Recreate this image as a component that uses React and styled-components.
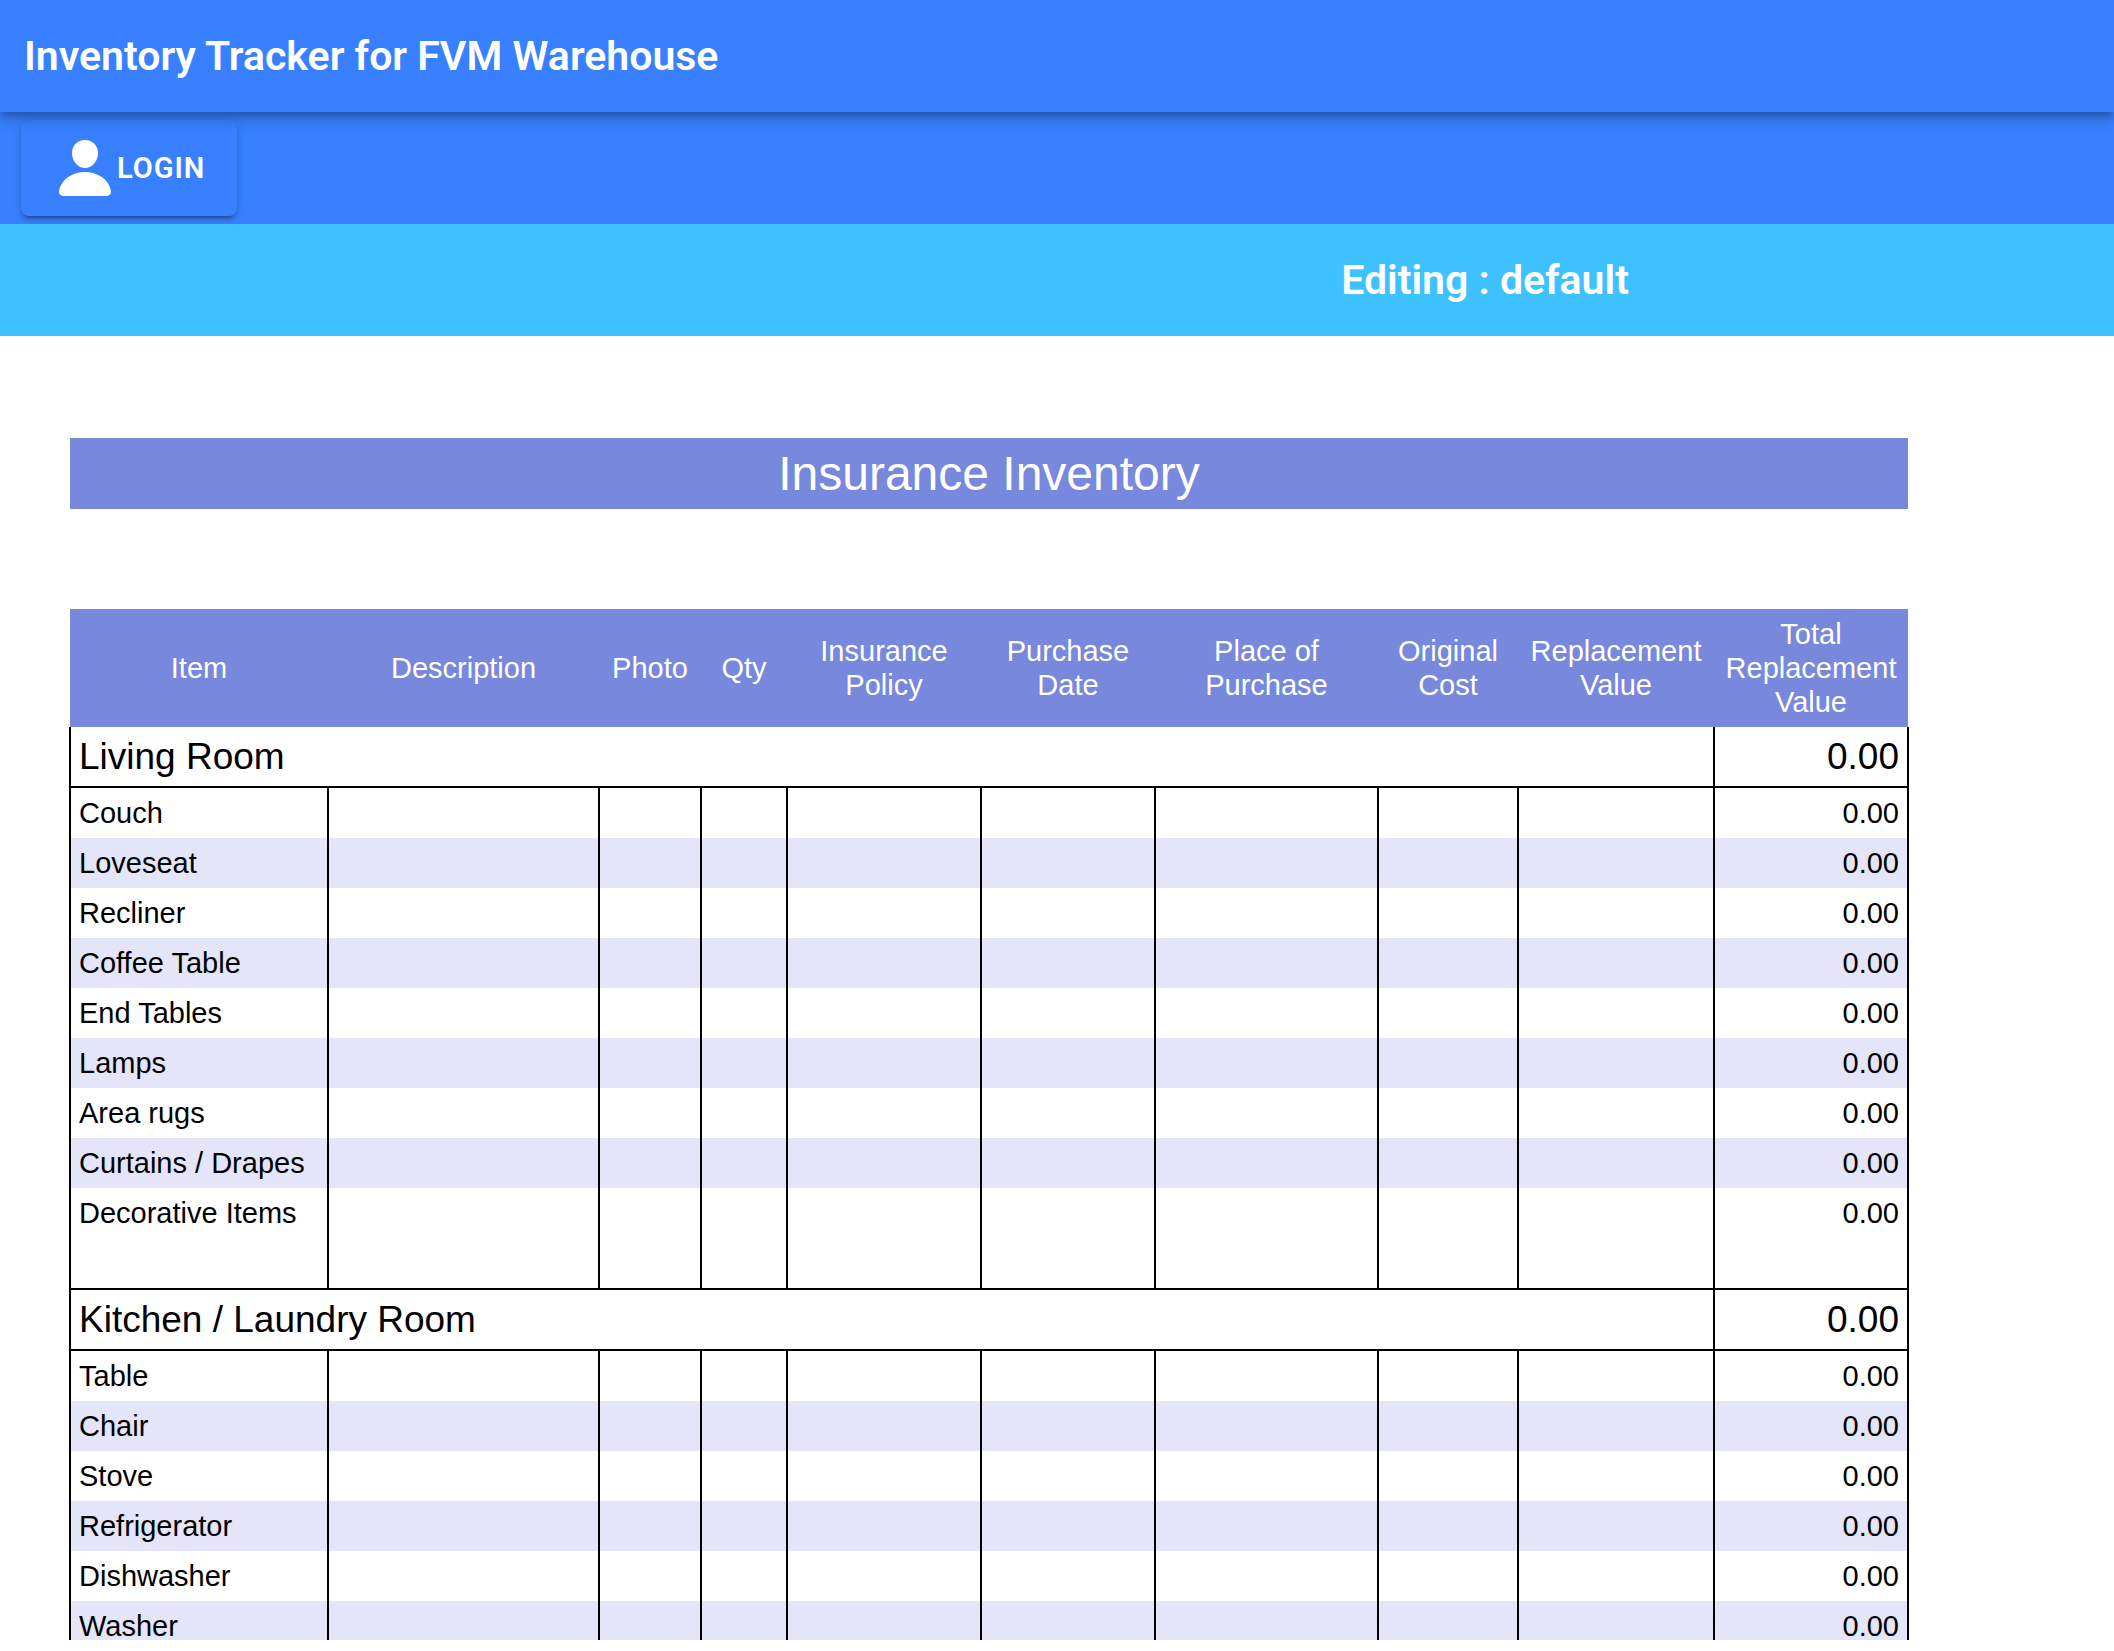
import React from 'react';
import styled, { createGlobalStyle } from 'styled-components';
import { IoPerson } from 'react-icons/io5';

const GlobalStyle = createGlobalStyle`
    * {
        box-sizing: border-box;
    }

    body {
        margin: 0;
        background-color: white;
        font-family: Roboto, sans-serif;
    }
`;

const Page = styled.div`
    display: flex;
    flex-direction: column;
    height: calc(100vh - 11px);
    overflow: hidden;
`;

const Header = styled.header`
    position: relative;
    z-index: 1;
    flex-shrink: 0;
    box-shadow: 0 4px 8px -2px rgba(0, 0, 0, 0.2), 0 8px 10px 0 rgba(0, 0, 0, 0.14), 0 2px 20px 0 rgba(0, 0, 0, 0.12);
`;

const Toolbar = styled.div`
    display: flex;
    align-items: center;
    flex-shrink: 0;
    min-height: 112px;
    padding: ${({ $padding }) => $padding || '0 24px'};
    background-color: ${({ $color }) => $color || '#3880ff'};
`;

const AppTitle = styled.h1`
    margin: 0;
    color: white;
    font-size: 41px;
    font-weight: 600;
    line-height: 48px;
`;

const FileTitle = styled(AppTitle).attrs({ as: 'h2' })`
    flex: 1;
    text-align: center;
`;

const LoginButton = styled.button`
    display: flex;
    align-items: center;
    height: 96px;
    padding: 0 32px;
    border: none;
    border-radius: 8px;
    background-color: #3880ff;
    box-shadow: 0 6px 2px -4px rgba(0, 0, 0, 0.2), 0 4px 4px 0 rgba(0, 0, 0, 0.14), 0 2px 10px 0 rgba(0, 0, 0, 0.12);
    color: white;
    font-family: inherit;
    font-size: 29px;
    font-weight: 600;
    letter-spacing: 1px;
    text-transform: uppercase;
    cursor: pointer;
`;

const Sheet = styled.main`
    flex: 1;
    min-height: 0;
    overflow: hidden;
    padding: 102px 206px 0 70px;
    font-family: Arial, "Liberation Sans", sans-serif;
`;

const SheetTitle = styled.h2`
    margin: 0 0 100px;
    padding: 8px;
    background-color: #7788dd;
    color: white;
    font-size: 48px;
    font-weight: 400;
    line-height: 55px;
    text-align: center;
`;

// the outer borders straddle the edges of the title bar
const Table = styled.table`
    width: calc(100% + 2px);
    margin: 0 -1px;
    table-layout: fixed;
    border-collapse: collapse;
    color: black;
    font-size: 29px;
    line-height: 34px;
`;

const Column = styled.col`
    width: ${({ $share }) => $share}%;
`;

const HeadCell = styled.th`
    padding: 8px;
    background-color: #7788dd;
    color: white;
    font-weight: 400;
    text-align: center;
    vertical-align: middle;
`;

const SectionCell = styled.th`
    padding: 8px;
    border: 2px solid black;
    border-top-width: ${({ $first }) => ($first ? '0' : '2px')};
    font-size: 37px;
    font-weight: 400;
    line-height: 43px;
    text-align: ${({ $align }) => $align || 'left'};
`;

const ItemRow = styled.tr`
    background-color: ${({ $striped }) => ($striped ? '#e4e5f8' : 'white')};
`;

const ItemCell = styled.td`
    padding: 8px;
    border-left: 2px solid black;
    border-right: 2px solid black;
    text-align: ${({ $align }) => $align || 'left'};
    white-space: nowrap;
`;

const columns = [
    { label: 'Item', width: 258 },
    { label: 'Description', width: 271 },
    { label: 'Photo', width: 102 },
    { label: 'Qty', width: 86 },
    { label: 'Insurance Policy', width: 194 },
    { label: 'Purchase Date', width: 174 },
    { label: 'Place of Purchase', width: 223 },
    { label: 'Original Cost', width: 140 },
    { label: 'Replacement Value', width: 196 },
    { label: 'Total Replacement Value', width: 194 },
];

const totalWidth = columns.reduce((sum, column) => sum + column.width, 0);

// an empty name is a blank line at the end of a section
const sections = [
    {
        name: 'Living Room',
        items: [
            'Couch',
            'Loveseat',
            'Recliner',
            'Coffee Table',
            'End Tables',
            'Lamps',
            'Area rugs',
            'Curtains / Drapes',
            'Decorative Items',
            '',
        ],
    },
    {
        name: 'Kitchen / Laundry Room',
        items: ['Table', 'Chair', 'Stove', 'Refrigerator', 'Dishwasher', 'Washer'],
    },
];

const formatValue = value => value.toFixed(2);

const Section = ({ section, first }) => (
    <tbody>
        <tr>
            <SectionCell $first={first} colSpan={columns.length - 1} scope="rowgroup">{section.name}</SectionCell>
            <SectionCell as="td" $first={first} $align="right">{formatValue(0)}</SectionCell>
        </tr>
        {section.items.map((item, index) => (
            <ItemRow key={index} $striped={item !== '' && index % 2 === 1}>
                <ItemCell>{item || '\u00a0'}</ItemCell>
                {columns.slice(1, -1).map(column => (
                    <ItemCell key={column.label} />
                ))}
                <ItemCell $align="right">{item && formatValue(0)}</ItemCell>
            </ItemRow>
        ))}
    </tbody>
);

const InventoryTable = () => (
    <Table>
        <colgroup>
            {columns.map(column => (
                <Column key={column.label} $share={(column.width / totalWidth) * 100} />
            ))}
        </colgroup>
        <thead>
            <tr>
                {columns.map(column => (
                    <HeadCell key={column.label} scope="col">{column.label}</HeadCell>
                ))}
            </tr>
        </thead>
        {sections.map((section, index) => (
            <Section key={section.name} section={section} first={index === 0} />
        ))}
    </Table>
);

const App = () => {
    return (
        <Page>
            <GlobalStyle />
            <Header>
                <Toolbar>
                    <AppTitle>Inventory Tracker for FVM Warehouse</AppTitle>
                </Toolbar>
            </Header>
            <Toolbar $padding="0 21px">
                <LoginButton type="button">
                    <IoPerson size={64} />
                    Login
                </LoginButton>
            </Toolbar>
            <Toolbar $color="#3dc2ff" $padding="0 0 0 40.5%">
                <FileTitle>Editing : default</FileTitle>
            </Toolbar>
            <Sheet>
                <SheetTitle>Insurance Inventory</SheetTitle>
                <InventoryTable />
            </Sheet>
        </Page>
    );
};

export default App;
